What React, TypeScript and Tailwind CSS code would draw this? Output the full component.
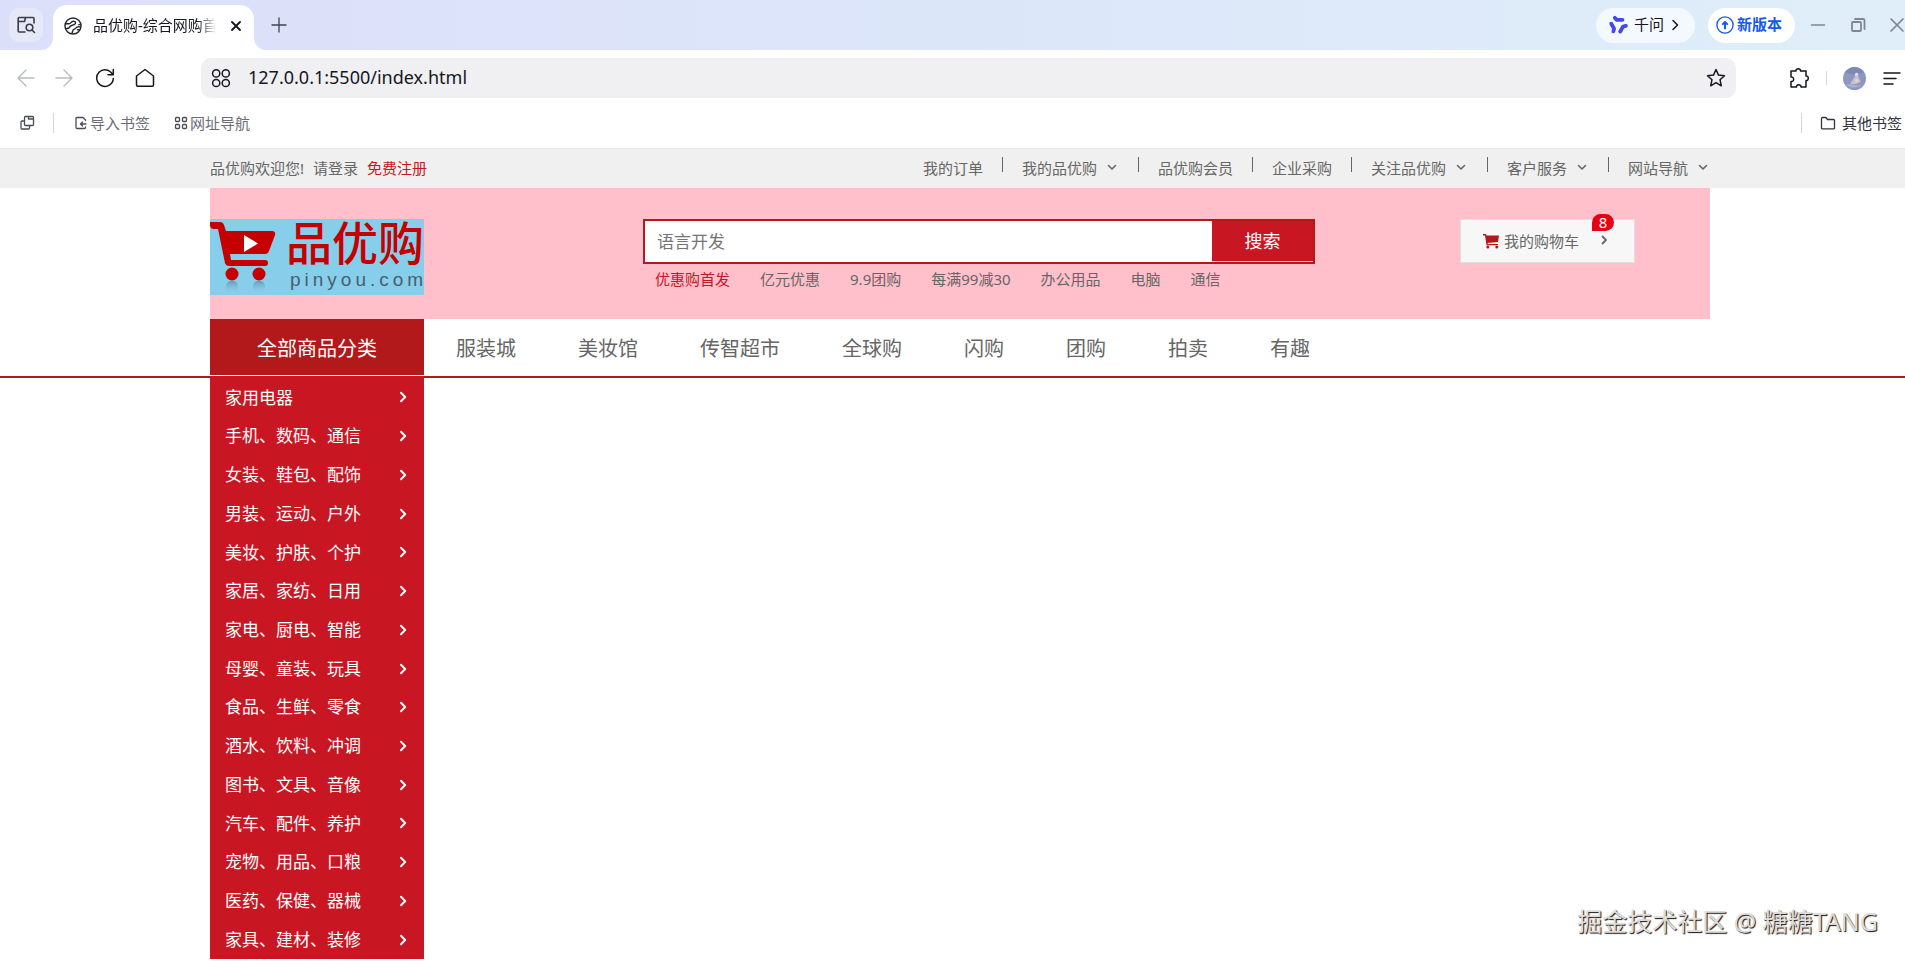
import type { ReactNode } from "react";

function Icon({ className, children, stroke = 1.5, box = 20 }: { className: string; children: ReactNode; stroke?: number; box?: number }) {
  return (
    <svg aria-hidden="true" viewBox={`0 0 ${box} ${box}`} className={`shrink-0 ${className}`} fill="none" stroke="currentColor" strokeWidth={stroke} strokeLinecap="round" strokeLinejoin="round">
      {children}
    </svg>
  );
}

function TabStrip() {
  return (
    <div className="flex h-[50px] items-start bg-linear-to-r from-[#dcdffa] via-[#dce6f9] to-[#dfeef9]">
      <div className="flex h-[50px] w-[53px] shrink-0 pt-2 pl-[9px]">
        <button type="button" aria-label="搜索标签页" className="flex size-[34px] items-center justify-center rounded-[10px] bg-[#e6e8f8] text-[#3a3c4c]">
          <Icon className="size-5" stroke={1.6}>
            <path d="M9 17H3.200a1 1 0 0 1-1-1V3.500a1 1 0 0 1 1-1H17a1 1 0 0 1 1 1V8M2.200 6.500H8.500L9.500 2.700" />
            <circle cx="13.500" cy="12.500" r="3.300" />
            <path d="m16 15 2.500 2.500" />
          </Icon>
        </button>
      </div>
      <div className="relative mt-[5px] flex h-[45px] w-[201px] shrink-0 items-center rounded-t-[14px] bg-white pb-1 pl-[11px]">
        <svg aria-hidden="true" className="absolute bottom-0 -left-3 size-3 fill-white" viewBox="0 0 12 12"><path d="M12 0v12H0A12 12 0 0 0 12 0" /></svg>
        <svg aria-hidden="true" className="absolute -right-3 bottom-0 size-3 fill-white" viewBox="0 0 12 12"><path d="M0 0v12h12A12 12 0 0 1 0 0" /></svg>
        <Icon className="size-[18px] text-[#26272e]" stroke={1.600}>
          <circle cx="10" cy="10" r="8.900" />
          <path d="M2 7.500h3.500C8 7.500 7.500 4.800 10.500 4.800s3 2.500.8 3.600-3.800.6-4.800 2.600-2 2-4.500 2" />
          <path d="M18.500 8.500h-2M9 17.500c1-2 .5-3.500 2.500-4s1.500-3.500 6.500-2.500M17.500 14.200h-2.500" />
        </Icon>
        <span className="ml-[11px] w-[123px] overflow-hidden text-[15px] whitespace-nowrap text-[#17181f] mask-r-from-85%">品优购-综合网购首</span>
        <button type="button" aria-label="关闭标签页" className="ml-3.5 text-[#17181f]">
          <Icon className="size-3" stroke={1.900} box={12}><path d="m2 2 8 8M10 2l-8 8" /></Icon>
        </button>
      </div>
      <button type="button" aria-label="新标签页" className="mt-[17px] ml-[17px] text-[#3f4254]">
        <Icon className="size-4" stroke={1.300} box={16}><path d="M8 1v14M1 8h14" /></Icon>
      </button>
      <div className="ml-auto flex h-[50px] shrink-0 items-start pt-2">
        <button type="button" className="flex h-[35px] w-[99px] items-center rounded-full bg-[#f4f9ff] pb-0.5 pl-3 text-[15px] text-[#14151c]">
          <Icon className="size-5 text-[#4246f5]" stroke={3.800}>
            <path d="M6.800 2.800 8.800 4.800H14.500" />
            <path d="M6.800 2.800 8.800 4.800H14.500" transform="rotate(120 10 10)" />
            <path d="M6.800 2.800 8.800 4.800H14.500" transform="rotate(240 10 10)" />
          </Icon>
          <span className="ml-1.5">千问</span>
          <Icon className="ml-[5px] size-3" stroke={1.500} box={12}><path d="m4 1.500 4.500 4.500L4 10.500" /></Icon>
        </button>
        <button type="button" className="ml-[13px] flex h-[35px] w-[87px] items-center rounded-full bg-white pb-0.5 pl-2 text-[15px] font-bold text-[#1459e8]">
          <Icon className="size-[18px]"><circle cx="10" cy="10" r="9" /><path d="M10 14V7M7.500 9 10 6.500 12.500 9" strokeWidth="2.200" /></Icon>
          <span className="ml-[3px]">新版本</span>
        </button>
        <button type="button" aria-label="最小化" className="mt-[9px] ml-[15px] text-[#7d8790]"><Icon className="size-4" box={16}><path d="M1.500 8h13" /></Icon></button>
        <button type="button" aria-label="还原" className="mt-[9px] ml-6 text-[#7d8790]"><Icon className="size-4" box={16} stroke={1.800}><rect x="2" y="5" width="9" height="9" rx="1" /><path d="M5 2h8a1.500 1.500 0 0 1 1.500 1.500V12" /></Icon></button>
        <button type="button" aria-label="关闭" className="mt-[9px] ml-[23px] text-[#7d8790]"><Icon className="size-4" box={16} stroke={1.700}><path d="m2 2 12 12M14 2 2 14" /></Icon></button>
      </div>
    </div>
  );
}

function AddressRow() {
  return (
    <div className="flex h-[56px] items-center bg-white pr-[3px] pl-4">
      <div className="flex w-[185px] shrink-0 items-center text-[#16171f]">
        <button type="button" aria-label="后退" className="text-[#b9bac0]"><Icon className="size-5" stroke={1.300}><path d="M18 10H2M10 2 2 10l8 8" /></Icon></button>
        <button type="button" aria-label="前进" className="ml-[18px] text-[#b9bac0]"><Icon className="size-5" stroke={1.300}><path d="M2 10h16M10 2l8 8-8 8" /></Icon></button>
        <button type="button" aria-label="刷新" className="ml-[21px]"><Icon className="size-5" stroke={1.500}><path d="M17.500 6.500A8.300 8.300 0 1 0 18.300 10.500M18.300 1.500v5.300H13" /></Icon></button>
        <button type="button" aria-label="主页" className="ml-5"><Icon className="size-5" stroke={1.500}><path d="M10 1.500 1.500 8V17a1.200 1.200 0 0 0 1.200 1.200h14.600a1.200 1.200 0 0 0 1.200-1.200V8z" /></Icon></button>
      </div>
      <div className="flex h-10 flex-1 items-center rounded-[10px] bg-[#f0eff2] pr-2.5 pl-[10px] text-[#16171f]">
        <Icon className="size-5" stroke={1.500}><circle cx="5.200" cy="5.400" r="3.600" /><circle cx="14.800" cy="5.400" r="3.600" /><circle cx="5.200" cy="15" r="3.600" /><circle cx="14.800" cy="15" r="3.600" /></Icon>
        <input aria-label="地址" defaultValue="127.0.0.1:5500/index.html" className="ml-[17px] min-w-0 flex-1 bg-transparent pb-0.5 font-['Noto_Sans'] text-lg outline-none" />
        <button type="button" aria-label="收藏"><Icon className="size-5" stroke={1.500}><path d="m10 1.500 2.500 5.600 6 .6-4.500 4 1.300 6.100-5.300-3.200-5.300 3.200L6 11.700l-4.500-4 6-.6z" /></Icon></button>
      </div>
      <div className="flex w-[166px] shrink-0 items-center pl-[52px] text-[#16171f]">
        <button type="button" aria-label="扩展"><Icon className="size-[22px]" stroke={1.500} box={22}><path d="M3 4h5c-.5-3 5-3 4.500 0H18v5c3-.5 3 5 0 4.500V20h-5c.5-3-5-3-4.500 0H3v-5.500c3.500.5 3.500-5 0-4.500z" /></Icon></button>
        <span className="ml-[16px] h-3.5 w-px bg-[#d8d9de]" />
        <button type="button" aria-label="账户" className="ml-4">
          <svg aria-hidden="true" viewBox="0 0 22 22" className="size-[23px]">
            <circle cx="11" cy="11" r="11" fill="#8e98bf" />
            <path d="M2 5a11 11 0 0 1 18 0l-8 3z" fill="#7b89b8" />
            <path d="m8 14 3-4 1-3 2-1 1 4 2 4-4 2-6 1z" fill="#c9bfd3" />
            <circle cx="13" cy="7" r="1.600" fill="#ecd9d8" />
            <path d="m11 12 3-1 1 3-3 1z" fill="#e8cfc9" />
            <path d="M3 17c4-2 10 2 15 0a11 11 0 0 1-15 0" fill="#a8b0cf" />
          </svg>
        </button>
        <button type="button" aria-label="菜单" className="ml-4"><Icon className="size-5" stroke={1.500}><path d="M2 5h16M2 10.500h12M2 16h9" /></Icon></button>
      </div>
    </div>
  );
}

function BookmarkRow() {
  return (
    <div className="flex h-[43px] items-center border-b border-[#e6e6e8] bg-white pb-2 pl-[19px] text-[15px] text-[#6a6c76]">
      <button type="button" aria-label="标签组" className="text-[#4a4c55]"><Icon className="size-4" stroke={1.300} box={16}><path d="M6.500 1.500h7a1 1 0 0 1 1 1v7a1 1 0 0 1-1 1h-7a1 1 0 0 1-1-1v-7a1 1 0 0 1 1-1M9.500 1.500V4h5M5.500 6H3a1 1 0 0 0-1 1v6a1 1 0 0 0 1 1h6.500a1 1 0 0 0 1-1v-2.500" /></Icon></button>
      <span className="ml-[18px] h-5 w-px bg-[#d5d5da]" />
      <a href="#import" className="ml-5 flex items-center">
        <Icon className="size-3.5 text-[#4a4c55]" stroke={1.300} box={14}><path d="M11.500 4.500V4L9 1.500H3a1 1 0 0 0-1 1v9a1 1 0 0 0 1 1h7.500a1 1 0 0 0 1-1V11M12 8H6.500M8.500 6l-2 2 2 2" /></Icon>
        <span className="ml-0.5">导入书签</span>
      </a>
      <a href="#sites" className="ml-6 flex items-center">
        <Icon className="size-3.5 text-[#4a4c55]" stroke={1.300} box={14}><rect x="1.500" y="1.500" width="4" height="4" rx="1" /><rect x="8.500" y="1.500" width="4" height="4" rx="1" /><rect x="1.500" y="8.500" width="4" height="4" rx="1" /><rect x="8.500" y="8.500" width="4" height="4" rx="1" /></Icon>
        <span className="ml-0.5">网址导航</span>
      </a>
      <span className="ml-auto h-5 w-px bg-[#d5d5da]" />
      <a href="#other" className="ml-[18px] flex items-center pr-[3px] text-[#33343c]">
        <Icon className="size-4" stroke={1.300} box={16}><path d="M1.500 13V3.500a1 1 0 0 1 1-1H6l1.500 2h6a1 1 0 0 1 1 1V13a.8.8 0 0 1-.8.800H2.300a.8.800 0 0 1-.8-.800" /></Icon>
        <span className="ml-1.5">其他书签</span>
      </a>
    </div>
  );
}

const shortcuts = [
  { label: "我的订单", menu: false },
  { label: "我的品优购", menu: true },
  { label: "品优购会员", menu: false },
  { label: "企业采购", menu: false },
  { label: "关注品优购", menu: true },
  { label: "客户服务", menu: true },
  { label: "网站导航", menu: true },
];

function Shortcuts() {
  return (
    <div className="flex h-[39px] items-center justify-between bg-[#f0f0f0] pr-[195px] pb-px pl-[210px] text-[15px] text-[#666]">
      <p className="flex whitespace-nowrap">
        <span>品优购欢迎您!</span>
        <a href="#login" className="ml-[9px]">请登录</a>
        <a href="#register" className="ml-[9px] text-[#c81623]">免费注册</a>
      </p>
      <ul className="flex items-center whitespace-nowrap">
        {shortcuts.map((item, i) => (
          <li key={item.label} className="flex items-center">
            {i > 0 && <span className="mx-[19px] mb-2 h-[15px] w-px bg-[#666]" />}
            <a href="#shortcut" className="flex items-center">
              {item.label}
              {item.menu && <Icon className="mb-0.5 ml-2 size-3.5" box={14} stroke={1.600}><path d="M3.500 5.500 7 9l3.500-3.500" /></Icon>}
            </a>
          </li>
        ))}
      </ul>
    </div>
  );
}

function Logo() {
  return (
    <a href="#home" aria-label="品优购" className="block h-[76px] w-[214px] overflow-hidden bg-[#87ceeb]">
      <svg aria-hidden="true" viewBox="0 0 214 76" className="h-[76px] w-[214px]">
        <defs>
          <linearGradient id="wheelShade" x1="0" y1="0" x2="0" y2="1">
            <stop offset="0" stopColor="#5d8ea6" stopOpacity=".8" />
            <stop offset="1" stopColor="#87ceeb" stopOpacity="0" />
          </linearGradient>
        </defs>
        <g fill="#c40000">
          <path d="M0 3h10q3 0 4 3l2 6h46q4 0 3 4l-6 16q-1 3-4 3H20l1 6h34q3 0 3 3t-3 3H19q-3 0-4-3L8 10H3Q0 9 0 6z" />
          <circle cx="22" cy="55" r="6.500" />
          <circle cx="49" cy="55" r="6.500" />
        </g>
        <path d="M34 16v17l14-8.500z" fill="#fff" />
        <rect x="16" y="62" width="12" height="12" rx="5" fill="url(#wheelShade)" />
        <rect x="43" y="62" width="12" height="12" rx="5" fill="url(#wheelShade)" />
        <text x="76" y="41" fontSize="46" fontWeight="500" fill="#c40000" fontFamily="Noto Sans CJK SC, sans-serif">品优购</text>
        <text x="80" y="67" fontSize="19" fill="#45606f" letterSpacing="4" fontFamily="Liberation Sans, sans-serif">pinyou.com</text>
      </svg>
    </a>
  );
}

const hotWords = ["优惠购首发", "亿元优惠", "9.9团购", "每满99减30", "办公用品", "电脑", "通信"];

function Header() {
  return (
    <header className="pr-[195px] pl-[210px]">
      <div className="flex h-[131px] items-start bg-[#ffc0cb] pt-[31px] pr-[75px]">
        <Logo />
        <div className="ml-[219px] w-[672px]">
          <form className="flex h-[45px] border-2 border-[#b1191a]" onSubmit={(e) => e.preventDefault()}>
            <input aria-label="搜索商品" placeholder="语言开发" className="min-w-0 flex-1 bg-white pl-3 text-[17px] outline-none placeholder:text-[#757575]" />
            <button type="submit" className="w-[101px] border-b border-[#ffc0cb] bg-[#c81623] text-lg text-white">搜索</button>
          </form>
          <ul className="mt-1 flex gap-[30px] pl-3 text-[15px] leading-[22px] whitespace-nowrap text-[#666]">
            {hotWords.map((w, i) => (
              <li key={w}><a href="#hot" className={i === 0 ? "text-[#c81623]" : ""}>{w}</a></li>
            ))}
          </ul>
        </div>
        <a href="#cart" className="relative ml-auto flex h-11 w-[175px] items-center border border-[#dfdfdf] bg-[#f7f7f7] pl-[22px] text-[15px] text-[#666]">
          <svg aria-hidden="true" viewBox="0 0 16 16" className="size-4 fill-[#b1191a]">
            <path d="M0 1h3l.5 1.500H16L15 9 4.500 10l.3 1H15v1.300H3.500L2 2.500H0z" /><circle cx="4.800" cy="14" r="1.500" /><circle cx="13.800" cy="14" r="1.500" />
          </svg>
          <span className="ml-[5px]">我的购物车</span>
          <Icon className="mb-0.5 ml-[18px] size-3.5" box={14} stroke={1.800}><path d="M5.500 3.500 9 7l-3.500 3.500" /></Icon>
          <span className="absolute -top-1.5 right-5 flex h-[17px] w-[22px] items-center justify-center rounded-t-[9px] rounded-br-[9px] bg-[#e60012] text-[15px] text-white">8</span>
        </a>
      </div>
    </header>
  );
}

const navItems = ["服装城", "美妆馆", "传智超市", "全球购", "闪购", "团购", "拍卖", "有趣"];

function Nav() {
  return (
    <nav className="flex h-[59px] items-start border-b-2 border-[#b1191a] pl-[210px] text-xl whitespace-nowrap text-[#666]">
      <h2 className="flex h-14 w-[214px] items-center justify-center bg-[#b1191a] pt-1 text-white">全部商品分类</h2>
      <ul className="flex h-14 items-center gap-[62px] pt-1 pl-8">
        {navItems.map((n) => (
          <li key={n}><a href="#nav">{n}</a></li>
        ))}
      </ul>
    </nav>
  );
}

const categories = [
  "家用电器",
  "手机、数码、通信",
  "女装、鞋包、配饰",
  "男装、运动、户外",
  "美妆、护肤、个护",
  "家居、家纺、日用",
  "家电、厨电、智能",
  "母婴、童装、玩具",
  "食品、生鲜、零食",
  "酒水、饮料、冲调",
  "图书、文具、音像",
  "汽车、配件、养护",
  "宠物、用品、口粮",
  "医药、保健、器械",
  "家具、建材、装修",
];

function Categories() {
  return (
    <ul className="-mt-[2px] ml-[210px] flex h-[583px] w-[214px] flex-col bg-[#c81623] pt-[2px] text-[17px] text-white">
      {categories.map((c) => (
        <li key={c} className="flex flex-1">
          <a href="#category" className="flex flex-1 items-center justify-between pr-[14px] pl-[15px]">
            {c}
            <Icon className="size-3.5" box={14} stroke={2}><path d="M5 2.800 9.200 7 5 11.200" /></Icon>
          </a>
        </li>
      ))}
    </ul>
  );
}

export default function App() {
  return (
    <div className="relative min-h-screen overflow-hidden bg-white font-['Noto_Sans','Noto_Sans_CJK_SC',sans-serif]">
      <TabStrip />
      <AddressRow />
      <BookmarkRow />
      <Shortcuts />
      <Header />
      <Nav />
      <Categories />
      <p className="absolute right-[27px] bottom-[22px] text-[25px] text-[#dcdcdc] [text-shadow:1px_1px_1px_#111]">掘金技术社区 @ 糖糖TANG</p>
    </div>
  );
}
